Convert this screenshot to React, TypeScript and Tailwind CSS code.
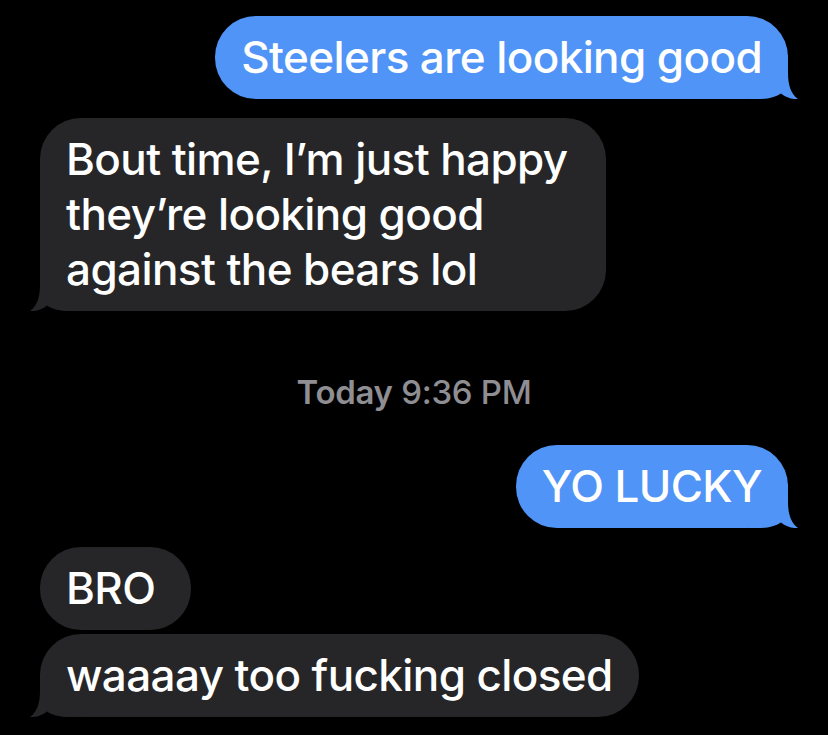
import React from "react";

function Tail({ color, side }: { color: string; side: "left" | "right" }) {
  const pos = side === "right" ? "right-[-10px]" : "left-[-10px] scale-x-[-1]";
  return (
    <svg
      className={`absolute bottom-0 ${pos}`}
      width="50"
      height="44"
      viewBox="0 0 50 44"
    >
      <path
        d="M0 0 H40 V18 C40 30 43 39 50 44 C44 44.5 38 42.5 33 38.5 C27 42.5 20 44 10 44 H0 Z"
        fill={color}
      />
    </svg>
  );
}

function Bubble({
  children,
  sent,
  tail,
  className = "",
}: {
  children: React.ReactNode;
  sent?: boolean;
  tail?: boolean;
  className?: string;
}) {
  const color = sent ? "#4f94f6" : "#262628";
  return (
    <div
      className={`relative ${sent ? "self-end bg-[#4f94f6]" : "self-start bg-[#262628]"} rounded-[41px] px-[26px] py-[14px] text-white text-[44px] font-medium leading-[55px] tracking-[-0.6px] ${className}`}
    >
      {tail && <Tail color={color} side={sent ? "right" : "left"} />}
      <div className="relative">{children}</div>
    </div>
  );
}

export default function App() {
  return (
    <div
      className="w-[828px] h-[735px] bg-black overflow-hidden pt-[16px] px-[40px] flex flex-col"
      style={{ fontFamily: "Inter, 'Liberation Sans', sans-serif" }}
    >
      <Bubble sent tail>
        Steelers are looking good
      </Bubble>
      <Bubble tail className="mt-[19px] pr-[38px]">
        Bout time, I’m just happy
        <br />
        they’re looking good
        <br />
        against the bears lol
      </Bubble>
      <div className="mt-[62px] self-center text-[33px] leading-[38px] font-medium text-[#8e8e93] tracking-[-0.3px]">
        <span className="font-semibold">Today</span> 9:36 PM
      </div>
      <Bubble sent tail className="mt-[34px]">
        YO LUCKY
      </Bubble>
      <Bubble className="mt-[19px] pr-[36px]">BRO</Bubble>
      <Bubble tail className="mt-[4px]">
        waaaay too fucking closed
      </Bubble>
    </div>
  );
}
